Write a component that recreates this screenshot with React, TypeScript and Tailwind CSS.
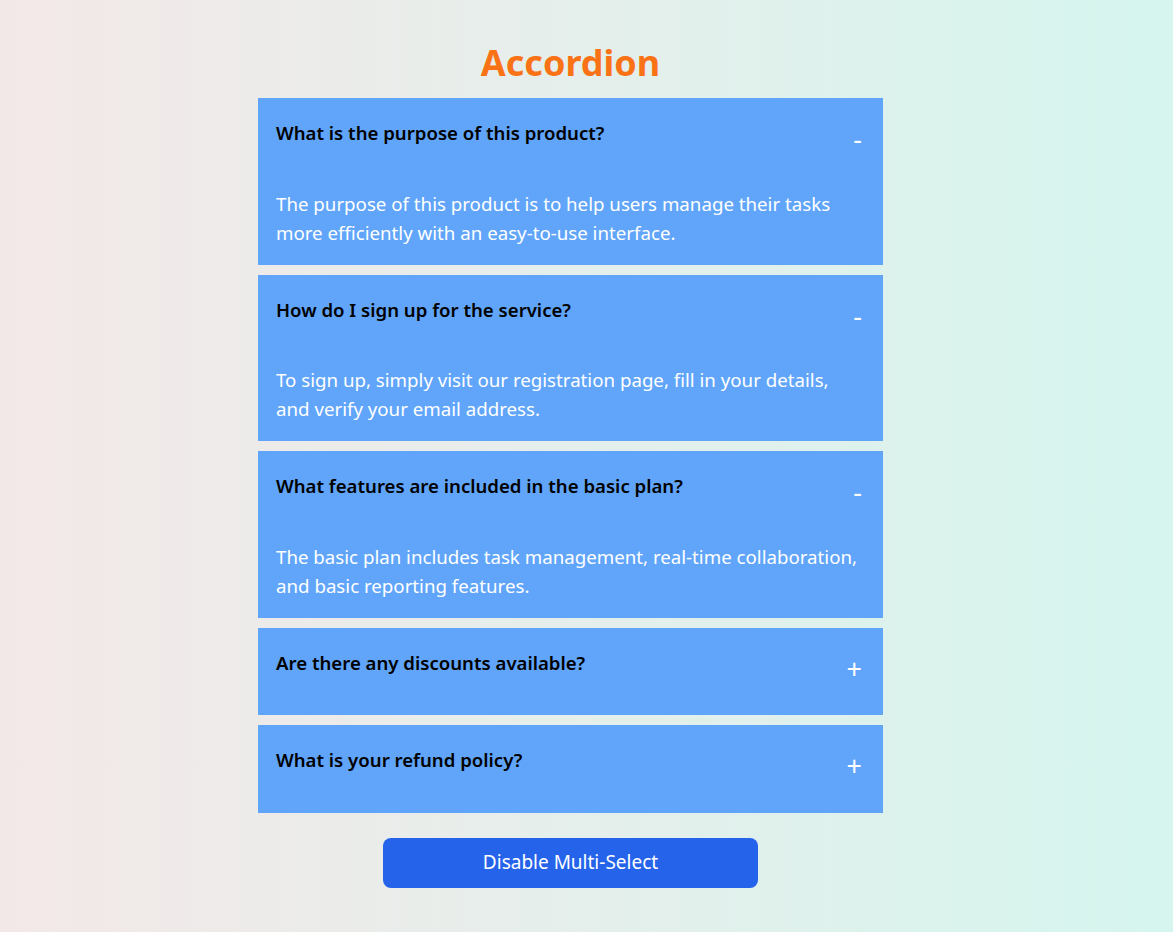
import React, { useState } from "react";

interface FaqItem {
  question: string;
  answer: string;
}

const faqs: FaqItem[] = [
  {
    question: "What is the purpose of this product?",
    answer:
      "The purpose of this product is to help users manage their tasks more efficiently with an easy-to-use interface.",
  },
  {
    question: "How do I sign up for the service?",
    answer:
      "To sign up, simply visit our registration page, fill in your details, and verify your email address.",
  },
  {
    question: "What features are included in the basic plan?",
    answer:
      "The basic plan includes task management, real-time collaboration, and basic reporting features.",
  },
  {
    question: "Are there any discounts available?",
    answer: "Yes, we offer seasonal discounts and special pricing for students and non-profits.",
  },
  {
    question: "What is your refund policy?",
    answer: "We offer a full refund within 30 days of purchase, no questions asked.",
  },
];

export default function App() {
  const [multi, setMulti] = useState(true);
  const [open, setOpen] = useState<number[]>([0, 1, 2]);

  const toggle = (i: number) => {
    if (open.includes(i)) {
      setOpen(open.filter((x) => x !== i));
    } else {
      setOpen(multi ? [...open, i] : [i]);
    }
  };

  return (
    <div className="min-h-screen bg-gradient-to-r from-[#f3e8e8] to-[#d5f5ee] pr-[32px] font-['Noto_Sans',sans-serif]">
      <div className="mx-auto flex w-[625px] flex-col items-center pt-[39px]">
        <h1 className="mb-[11px] text-[36px] font-bold leading-[48px] text-[#f97316]">Accordion</h1>

        <div className="flex w-full flex-col gap-[10px]">
          {faqs.map((item, i) => {
            const isOpen = open.includes(i);
            return (
              <div key={item.question} className="bg-[#60a5fa]">
                <button
                  onClick={() => toggle(i)}
                  className="flex w-full cursor-pointer items-start justify-between pb-[38.5px] pl-[18px] pr-[21px] pt-[21px] text-left"
                >
                  <span className="text-[18.6px] font-semibold leading-7 text-black">{item.question}</span>
                  <span className="pt-[12px] text-[27px] leading-[16px] text-white">{isOpen ? "-" : "+"}</span>
                </button>
                {isOpen && (
                  <div className="px-[18px] pb-[18px] pt-[3px] text-[18.7px] leading-[29px] text-white">
                    {item.answer}
                  </div>
                )}
              </div>
            );
          })}
        </div>

        <button
          onClick={() => {
            setMulti(!multi);
            if (multi) setOpen(open.slice(0, 1));
          }}
          className="mt-[25px] h-[50px] w-[375px] cursor-pointer rounded-lg bg-[#2563eb] text-[19px] text-white"
        >
          {multi ? "Disable Multi-Select" : "Enable Multi-Select"}
        </button>
      </div>
    </div>
  );
}
